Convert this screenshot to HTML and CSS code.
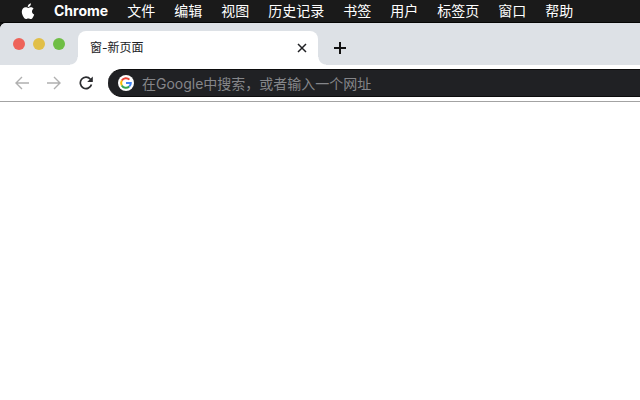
FILE: index.html
```html
<!DOCTYPE html>
<html lang="zh-CN">
<head>
    <meta charset="UTF-8">
    <meta name="viewport" content="width=device-width, initial-scale=1.0">
    <title>窗-新页面</title>
    <link rel="stylesheet" href="styles.css">
</head>
<body>

    <!-- 系统菜单栏 -->
    <nav class="menubar">
        <button type="button" class="apple" aria-label="Apple">
            <svg width="14" height="17" viewBox="0 0 14 17" fill="#fff">
                <path d="M9.9 0.3C10 1.4 9.6 2.4 9 3.1C8.4 3.8 7.6 4.2 6.8 4.1C6.7 3.1 7.1 2.1 7.7 1.5C8.3 0.8 9.2 0.4 9.9 0.3Z"/>
                <path d="M12.6 5.8C11.5 6.5 11 7.4 11 8.6C11 10 11.8 11.1 13.2 11.6C12.9 12.6 12.4 13.5 11.8 14.4C11.2 15.3 10.6 16 9.7 16C8.8 16 8.4 15.5 7.3 15.5C6.2 15.5 5.8 16 4.9 16C4 16 3.3 15.2 2.7 14.3C1.6 12.7 0.8 10.7 0.8 8.8C0.8 6.1 2.5 4.3 4.7 4.3C5.8 4.3 6.6 5 7.3 5C8 5 8.9 4.2 10.2 4.3C11.2 4.3 12.1 4.9 12.6 5.8Z"/>
            </svg>
        </button>
        <a class="app-name" href="#">Chrome</a>
        <a href="#">文件</a>
        <a href="#">编辑</a>
        <a href="#">视图</a>
        <a href="#">历史记录</a>
        <a href="#">书签</a>
        <a href="#">用户</a>
        <a href="#">标签页</a>
        <a href="#">窗口</a>
        <a href="#">帮助</a>
    </nav>

    <div class="window">
        <!-- 标签页 -->
        <div class="tabbar">
            <div class="lights">
                <button type="button" class="light red" aria-label="关闭"></button>
                <button type="button" class="light yellow" aria-label="最小化"></button>
                <button type="button" class="light green" aria-label="全屏"></button>
            </div>
            <div class="tab">
                <span class="tab-title">窗-新页面</span>
                <button type="button" class="icon-button" aria-label="关闭标签页">
                    <svg width="10" height="10" viewBox="0 0 10 10" stroke="#202124" stroke-width="1.5">
                        <path d="M1 1L9 9M9 1L1 9"/>
                    </svg>
                </button>
            </div>
            <button type="button" class="icon-button new-tab" aria-label="新标签页">
                <svg width="12" height="12" viewBox="0 0 12 12" stroke="#111" stroke-width="2">
                    <path d="M6 0V12M0 6H12"/>
                </svg>
            </button>
        </div>

        <!-- 工具栏 -->
        <form class="toolbar">
            <button type="button" class="icon-button" aria-label="后退">
                <svg width="14" height="14" viewBox="0 0 14 14" fill="none" stroke="#b0b0b0" stroke-width="1.4">
                    <path d="M14 7H1.5M7 1L1 7L7 13"/>
                </svg>
            </button>
            <button type="button" class="icon-button" aria-label="前进">
                <svg width="14" height="14" viewBox="0 0 14 14" fill="none" stroke="#b0b0b0" stroke-width="1.4">
                    <path d="M0 7H12.5M7 1L13 7L7 13"/>
                </svg>
            </button>
            <button type="button" class="icon-button" aria-label="刷新">
                <svg width="14" height="14" viewBox="0 0 14 14" fill="none" stroke="#2b2c2f" stroke-width="1.7">
                    <path d="M11.4 3.2A5.7 5.7 0 1 0 12.5 8.5"/>
                    <path d="M13.8 0.4V6H8.2Z" fill="#2b2c2f" stroke="none"/>
                </svg>
            </button>
            <div class="address">
                <svg width="16" height="16" viewBox="0 0 16 16" fill="none" stroke-width="2">
                    <circle cx="8" cy="8" r="8" fill="#fff"/>
                    <path d="M3.8 5.6A4.8 4.8 0 0 1 11.4 4.6" stroke="#ea4335"/>
                    <path d="M3.8 10.4A4.8 4.8 0 0 1 3.8 5.6" stroke="#fbbc05"/>
                    <path d="M11.2 11.6A4.8 4.8 0 0 1 3.8 10.4" stroke="#34a853"/>
                    <path d="M8 8H12.8A4.8 4.8 0 0 1 11.2 11.6" stroke="#4285f4"/>
                </svg>
                <input type="text" aria-label="地址栏" placeholder="在Google中搜索，或者输入一个网址">
            </div>
        </form>

        <main class="page"></main>
    </div>

</body>
</html>
```
FILE: styles.css
```css
* {
    box-sizing: border-box;
}
body {
    display: flex;
    flex-direction: column;
    min-height: 100vh;
    margin: 0;
    background-color: #111;
    font-family: Inter, "Noto Sans CJK SC", sans-serif;
}
button {
    padding: 0;
    border: none;
    background: none;
    cursor: pointer;
}
svg {
    display: block;
    flex: none;
}
.menubar {
    display: flex;
    align-items: center;
    gap: 19px;
    height: 23px;
    padding-left: 21px;
    background-color: #1a1a1a;
    border-bottom: 1px solid #050505;
    font-size: 14px;
    line-height: 22px;
    white-space: nowrap;
}
.menubar a {
    color: #fff;
    text-decoration: none;
}
.menubar .app-name {
    font-weight: 700;
}
.window {
    flex: 1;
    display: flex;
    flex-direction: column;
    background-color: #fff;
    border-radius: 6px 0 0 0;
    overflow: hidden;
}
.tabbar {
    display: flex;
    align-items: center;
    height: 42px;
    background-color: #dde1e6;
}
.lights {
    display: flex;
    align-items: center;
    gap: 8px;
    padding: 0 13px;
}
.light {
    width: 12px;
    height: 12px;
    border-radius: 50%;
}
.red {
    background-color: #ee6359;
}
.yellow {
    background-color: #e1bf48;
}
.green {
    background-color: #6fbe45;
}
.tab {
    position: relative;
    display: flex;
    align-items: center;
    justify-content: space-between;
    align-self: flex-end;
    width: 240px;
    height: 34px;
    padding: 0 8px 0 12px;
    background-color: #fff;
    border-radius: 8px 8px 0 0;
}
/* 标签底部两侧的圆角 */
.tab::before,
.tab::after {
    content: "";
    position: absolute;
    bottom: 0;
    width: 8px;
    height: 8px;
}
.tab::before {
    right: 100%;
    background: radial-gradient(circle at 0 0, #dde1e6 7px, #fff 8px);
}
.tab::after {
    left: 100%;
    background: radial-gradient(circle at 100% 0, #dde1e6 7px, #fff 8px);
}
.tab-title {
    color: #202124;
    font-size: 12px;
    line-height: 16px;
}
.icon-button {
    display: flex;
    align-items: center;
    justify-content: center;
    width: 16px;
    height: 16px;
}
.new-tab {
    margin: 8px 14px 0;
}
.toolbar {
    display: flex;
    align-items: center;
    gap: 16px;
    padding: 4px 0 4px 14px;
    border-bottom: 1px solid #a3a3a3;
}
.address {
    flex: 1;
    display: flex;
    align-items: center;
    gap: 8px;
    height: 28px;
    margin-left: -2px;
    padding-left: 10px;
    background-color: #202124;
    border: solid #0c0c0d;
    border-width: 1px 0;
    border-radius: 14px 0 0 14px;
}
.address input {
    flex: 1;
    min-width: 0;
    padding: 0;
    border: none;
    outline: none;
    background: none;
    color: #fff;
    font-family: inherit;
    font-size: 14px;
}
.address input::placeholder {
    color: #85868a;
    opacity: 1;
}
.page {
    flex: 1;
}
```
